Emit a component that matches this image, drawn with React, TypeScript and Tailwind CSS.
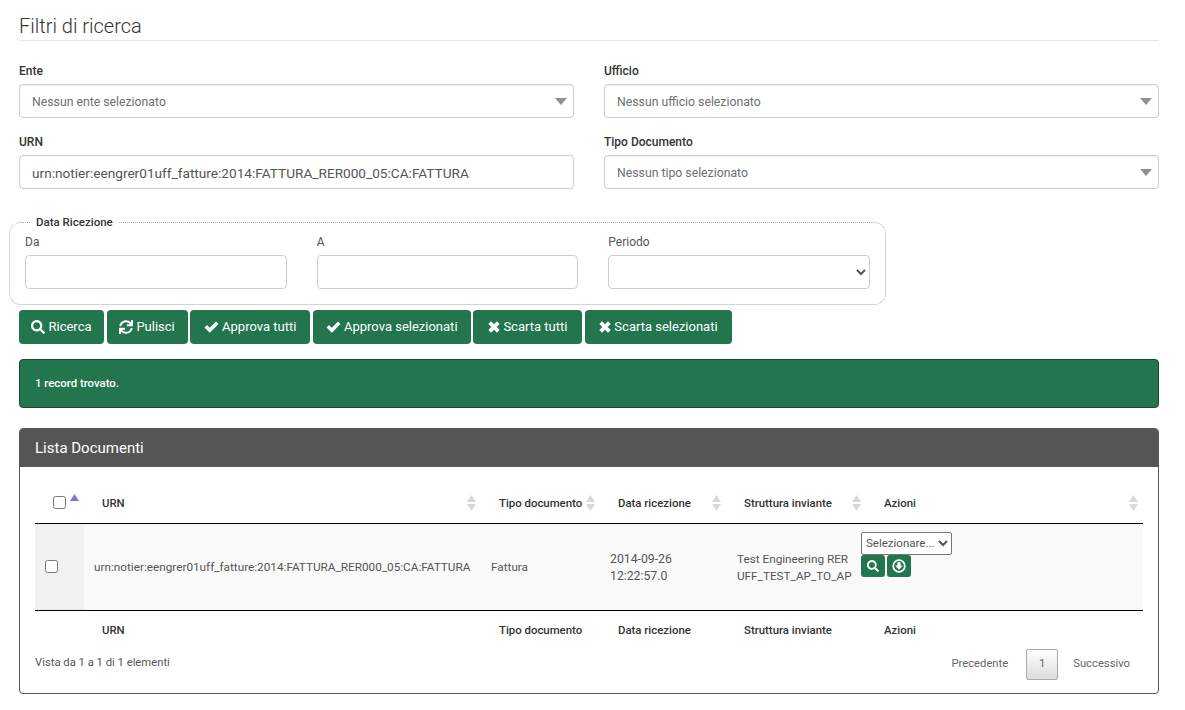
import React from "react";
import { FaSearch, FaSync } from "react-icons/fa";

const green = "bg-[#22754d]";

function Sort() {
  return (
    <svg width="9" height="16" viewBox="0 0 9 16" className="absolute right-[5px] top-[13px]">
      <path d="M4.5 0 L9 7 H0 Z" fill="#d8d8d8" />
      <path d="M4.5 16 L9 9 H0 Z" fill="#d8d8d8" />
    </svg>
  );
}

function FakeSelect({ text }: { text: string }) {
  return (
    <div className="flex h-[34px] items-center justify-between rounded border border-[#ccc] bg-white pl-3 pr-[6px] text-[12.25px] text-[#6b6f73] shadow-[inset_0_1px_1px_rgba(0,0,0,0.05)]">
      <span className="pt-[2px]">{text}</span>
      <svg width="12" height="7" viewBox="0 0 12 7">
        <path d="M0 0 H12 L6 7 Z" fill="#909090" />
      </svg>
    </div>
  );
}

function Btn({ icon, label, w }: { icon: React.ReactNode; label: string; w: string }) {
  return (
    <button className={`flex h-[34px] ${w} items-center justify-center gap-[3px] rounded ${green} text-[13px] text-white`}>
      {icon}
      {label}
    </button>
  );
}

function OkIcon() {
  return (
    <svg width="15" height="12" viewBox="0 0 15 12">
      <path d="M0.5 6.5 L3 4 L5.8 6.8 L12 0.5 L14.5 3 L5.8 11.7 Z" fill="#fff" />
    </svg>
  );
}

function RemoveIcon() {
  return (
    <svg width="12" height="12" viewBox="0 0 12 12">
      <path d="M0.3 3 L3 0.3 L6 3.3 L9 0.3 L11.7 3 L8.7 6 L11.7 9 L9 11.7 L6 8.7 L3 11.7 L0.3 9 L3.3 6 Z" fill="#fff" />
    </svg>
  );
}

function DownloadIcon() {
  return (
    <svg width="14" height="14" viewBox="0 0 13 13">
      <circle cx="6.5" cy="6.5" r="5.4" fill="none" stroke="#fff" strokeWidth="1.6" />
      <path d="M5 3 H8 V6 H10 L6.5 10 L3 6 H5 Z" fill="#fff" />
    </svg>
  );
}

function HeadCells({ sort }: { sort: boolean }) {
  const th = sort
    ? "relative pl-[18px] pt-[3px] text-left text-[11.4px] font-medium text-[#333]"
    : "relative pl-[18px] pt-[1px] text-left text-[11.4px] font-medium text-[#333]";
  return (
    <>
      <th className={th}>URN{sort && <Sort />}</th>
      <th className={th}>Tipo documento{sort && <Sort />}</th>
      <th className={th}>Data ricezione{sort && <Sort />}</th>
      <th className={th}>Struttura inviante{sort && <Sort />}</th>
      <th className={th}>Azioni{sort && <Sort />}</th>
    </>
  );
}

export default function App() {
  const label = "mb-[7px] block h-[14px] pt-[1px] text-[12px] font-medium leading-[14px] text-[#333]";
  const dateLabel = "mb-[5px] block h-[14px] text-[12px] leading-[14px] text-[#555]";
  const input = "block h-[34px] w-full rounded border border-[#ccc] bg-white px-3 pt-[2px] text-[13.65px] text-[#555]";
  return (
    <div className="h-[710px] overflow-hidden bg-white pl-[19px] pr-[26px] font-['Roboto',sans-serif] text-[#555]">
      <div className="h-[41px] border-b border-[#e5e5e5] pt-[13px]">
        <h2 className="text-[20px] font-light leading-[26px] text-[#333]">Filtri di ricerca</h2>
      </div>

      <div className="mt-[22px] grid grid-cols-2 gap-x-[30px] gap-y-[16px]">
        <div>
          <label className={label}>Ente</label>
          <FakeSelect text="Nessun ente selezionato" />
        </div>
        <div>
          <label className={label}>Ufficio</label>
          <FakeSelect text="Nessun ufficio selezionato" />
        </div>
        <div>
          <label className={label}>URN</label>
          <input className={input} readOnly value="urn:notier:eengrer01uff_fatture:2014:FATTURA_RER000_05:CA:FATTURA" />
        </div>
        <div>
          <label className={label}>Tipo Documento</label>
          <FakeSelect text="Nessun tipo selezionato" />
        </div>
      </div>

      <fieldset className="-ml-[10px] mt-[26px] h-[90px] w-[877px] rounded-[12px] border border-dotted border-[#aaa] px-[15px] pt-[6px]">
        <legend className="ml-[6px] px-[5px] text-[11.5px] font-medium leading-[14px] text-[#333]">Data Ricezione</legend>
        <div className="grid grid-cols-3 gap-x-[30px]">
          <div>
            <label className={dateLabel}>Da</label>
            <input className={input + " mt-[6px]"} />
          </div>
          <div>
            <label className={dateLabel}>A</label>
            <input className={input + " mt-[6px]"} />
          </div>
          <div>
            <label className={dateLabel}>Periodo</label>
            <select className={input + " mt-[6px] pl-2"}></select>
          </div>
        </div>
      </fieldset>

      <div className="mt-[5px] flex gap-[2.6px]">
        <Btn w="w-[85px]" icon={<FaSearch size={14} />} label="Ricerca" />
        <Btn w="w-[81px]" icon={<FaSync size={14} />} label="Pulisci" />
        <Btn w="w-[120px]" icon={<OkIcon />} label="Approva tutti" />
        <Btn w="w-[158px]" icon={<OkIcon />} label="Approva selezionati" />
        <Btn w="w-[109px]" icon={<RemoveIcon />} label="Scarta tutti" />
        <Btn w="w-[147px]" icon={<RemoveIcon />} label="Scarta selezionati" />
      </div>

      <div className={`mt-[15px] flex h-[49px] items-center rounded border border-[#16492f] ${green} px-[15px] text-[11.4px] font-medium text-white`}>
        1 record trovato.
      </div>

      <div className="mt-[20px] h-[266px] rounded border border-[#555]">
        <div className="flex h-[38px] items-center rounded-t-[3px] bg-[#555] px-[15px] text-[15px] text-white">Lista Documenti</div>
        <div className="px-[15px] pt-[15px]">
          <table className="w-[1108px] table-fixed border-collapse">
            <colgroup>
              <col className="w-[49px]" />
              <col className="w-[397px]" />
              <col className="w-[119px]" />
              <col className="w-[126px]" />
              <col className="w-[140px]" />
              <col className="w-[277px]" />
            </colgroup>
            <thead>
              <tr className="h-[41px] border-b border-black">
                <th className="relative">
                  <input type="checkbox" className="absolute left-[18px] top-[14px] h-[13px] w-[13px]" />
                  <svg width="9" height="7" viewBox="0 0 9 7" className="absolute left-[35px] top-[12px]">
                    <path d="M4.5 0 L9 7 H0 Z" fill="#7a7ad6" />
                  </svg>
                </th>
                <HeadCells sort />
              </tr>
            </thead>
            <tbody>
              <tr className="h-[87px] border-b border-black bg-[#f9f9f9] text-[11.75px] text-[#555]">
                <td className="bg-[#f1f1f1] pl-[10px]">
                  <input type="checkbox" className="block h-[13px] w-[13px]" />
                </td>
                <td className="pl-[10px] pt-[2px]">urn:notier:eengrer01uff_fatture:2014:FATTURA_RER000_05:CA:FATTURA</td>
                <td className="pl-[10px] pt-[2px]">Fattura</td>
                <td className="pl-[10px] pt-[2px] text-[12.25px] leading-[17px]">
                  2014-09-26
                  <br />
                  12:22:57.0
                </td>
                <td className="pl-[11px] pt-[2px] leading-[17px]">
                  Test Engineering RER
                  <br />
                  UFF_TEST_AP_TO_AP
                </td>
                <td className="align-top">
                  <div className="-ml-[5px] mt-[8px]">
                    <select className="block h-[23px] w-[91px] rounded-[2px] border border-[#767676] bg-white text-[11.5px] text-[#555]">
                      <option>Selezionare...</option>
                    </select>
                    <div className="flex gap-[2px]">
                      <button className={`flex h-[22px] w-[24px] items-center justify-center rounded-[3px] ${green} text-white`}>
                        <FaSearch size={12} />
                      </button>
                      <button className={`flex h-[22px] w-[24px] items-center justify-center rounded-[3px] ${green}`}>
                        <DownloadIcon />
                      </button>
                    </div>
                  </div>
                </td>
              </tr>
            </tbody>
            <tfoot>
              <tr className="h-[39px]">
                <th></th>
                <HeadCells sort={false} />
              </tr>
            </tfoot>
          </table>
          <div className="flex items-center justify-between pr-[13px] text-[11.25px]">
            <span className="-mt-[2px]">Vista da 1 a 1 di 1 elementi</span>
            <div className="flex items-center text-[#666]">
              <span>Precedente</span>
              <span className="ml-[18px] mr-[15px] flex h-[31px] w-[32px] items-center justify-center rounded-[2px] border border-[#aaa] bg-gradient-to-b from-white to-[#dcdcdc]">1</span>
              <span>Successivo</span>
            </div>
          </div>
        </div>
      </div>
    </div>
  );
}
